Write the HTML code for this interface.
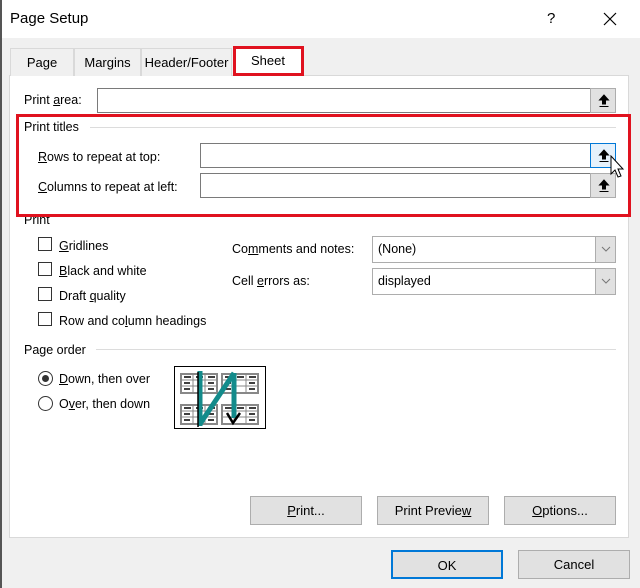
<!DOCTYPE html>
<html><head><style>
*{box-sizing:border-box;margin:0;padding:0}
body{width:640px;height:588px;background:#f0f0f0;font-family:"Liberation Sans",sans-serif;font-size:12.5px;color:#000;position:relative;overflow:hidden}
.a{position:absolute}
.title{left:0;top:0;width:640px;height:38px;background:#fff}
.tab{top:48px;height:28px;border:1px solid #d9d9d9;border-bottom:none;background:#f0f0f0;text-align:center;line-height:28px;font-size:13px}
.panel{left:9px;top:75px;width:620px;height:463px;background:#fff;border:1px solid #d9d9d9}
.inp{background:#fff;border:1px solid #7a7a7a;height:25px}
.ub{width:26px;height:25px;background:#e1e1e1;border:1px solid #adadad}
.ub svg{position:absolute;left:7px;top:5px}
.cb{width:14px;height:14px;border:1px solid #333;background:#fff}
.btn{height:29px;background:#e1e1e1;border:1px solid #adadad;text-align:center;line-height:27px;font-size:13px}
.sel{height:27px;border:1px solid #adadad;background:#fff;padding-left:5px;line-height:25px}
.sel .arr{position:absolute;right:0;top:0;width:20px;height:25px;background:#e1e1e1;border-left:1px solid #adadad}
.line{height:1px;background:#dcdcdc}
u{text-decoration:underline}
</style></head><body>
<div class="a title"></div>
<div class="a" style="left:0;top:0;width:2px;height:588px;background:#555"></div>
<div class="a" style="left:10px;top:10px;font-size:15px">Page Setup</div>
<div class="a" style="left:547px;top:10px;font-size:15px">?</div>
<svg class="a" style="left:603px;top:12px" width="14" height="14"><path d="M1 1L13 13M13 1L1 13" stroke="#000" stroke-width="1.2"/></svg>
<div class="a panel"></div>
<div class="a tab" style="left:10px;width:64px">Page</div>
<div class="a tab" style="left:74px;width:67px">Margins</div>
<div class="a tab" style="left:141px;width:91px">Header/Footer</div>
<div class="a tab" style="left:234px;top:46px;width:68px;height:30px;background:#fff;line-height:30px;border:none">Sheet</div>
<div class="a" style="left:233px;top:46px;width:71px;height:30px;border:3px solid #e0121f"></div>
<div class="a" style="left:24px;top:93px">Print <u>a</u>rea:</div>
<div class="a inp" style="left:97px;top:88px;width:494px"></div>
<div class="a ub" style="left:590px;top:88px"><svg width="12" height="14"><path d="M6 1L1.5 6H4.5V10H7.5V6H10.5Z M1.5 12.5H10.5" fill="#000" stroke="#000" stroke-width="1"/></svg></div>
<div class="a" style="left:24px;top:120px">Print titles</div>
<div class="a line" style="left:90px;top:127px;width:526px"></div>
<div class="a" style="left:38px;top:150px"><u>R</u>ows to repeat at top:</div>
<div class="a inp" style="left:200px;top:143px;width:391px"></div>
<div class="a ub" style="left:590px;top:143px;border-color:#0078d7;background:#e5f1fb"><svg width="12" height="14"><path d="M6 1L1.5 6H4.5V10H7.5V6H10.5Z M1.5 12.5H10.5" fill="#000" stroke="#000" stroke-width="1"/></svg></div>
<div class="a" style="left:38px;top:180px"><u>C</u>olumns to repeat at left:</div>
<div class="a inp" style="left:200px;top:173px;width:391px"></div>
<div class="a ub" style="left:590px;top:173px"><svg width="12" height="14"><path d="M6 1L1.5 6H4.5V10H7.5V6H10.5Z M1.5 12.5H10.5" fill="#000" stroke="#000" stroke-width="1"/></svg></div>
<div class="a" style="left:16px;top:114px;width:615px;height:103px;border:3px solid #e0121f"></div>
<svg class="a" style="left:609px;top:155px" width="20" height="28"><path d="M2 1 L2 19 L6 15 L9 22 L12 21 L9 14 L14 14 Z" fill="#fff" stroke="#000" stroke-width="1"/></svg>
<div class="a" style="left:24px;top:213px;clip-path:inset(4px 0 0 0)">Print</div>
<div class="a cb" style="left:38px;top:237px"></div><div class="a" style="left:59px;top:239px"><u>G</u>ridlines</div>
<div class="a cb" style="left:38px;top:262px"></div><div class="a" style="left:59px;top:264px"><u>B</u>lack and white</div>
<div class="a cb" style="left:38px;top:287px"></div><div class="a" style="left:59px;top:289px">Draft <u>q</u>uality</div>
<div class="a cb" style="left:38px;top:312px"></div><div class="a" style="left:59px;top:314px">Row and co<u>l</u>umn headings</div>
<div class="a" style="left:232px;top:242px">Co<u>m</u>ments and notes:</div>
<div class="a sel" style="left:372px;top:236px;width:244px">(None)<div class="arr"><svg width="20" height="25"><path d="M6 10L10 14L14 10" stroke="#777" fill="none"/></svg></div></div>
<div class="a" style="left:232px;top:274px">Cell <u>e</u>rrors as:</div>
<div class="a sel" style="left:372px;top:268px;width:244px">displayed<div class="arr"><svg width="20" height="25"><path d="M6 10L10 14L14 10" stroke="#777" fill="none"/></svg></div></div>
<div class="a" style="left:24px;top:343px">Page order</div>
<div class="a line" style="left:96px;top:349px;width:520px"></div>
<div class="a" style="left:38px;top:371px;width:15px;height:15px;border:1px solid #333;border-radius:50%;background:#fff"><div style="margin:3px;width:7px;height:7px;border-radius:50%;background:#333"></div></div>
<div class="a" style="left:59px;top:372px"><u>D</u>own, then over</div>
<div class="a" style="left:38px;top:396px;width:15px;height:15px;border:1px solid #333;border-radius:50%;background:#fff"></div>
<div class="a" style="left:59px;top:397px">O<u>v</u>er, then down</div>
<svg class="a" style="left:174px;top:366px" width="92" height="63">
<rect x="0.5" y="0.5" width="91" height="62" fill="#fff" stroke="#000"/>
<g fill="#fff" stroke="#888" stroke-width="2">
<rect x="7" y="8" width="36" height="19"/><rect x="48" y="8" width="36" height="19"/>
<rect x="7" y="39" width="36" height="19"/><rect x="48" y="39" width="36" height="19"/></g>
<g stroke="#888" stroke-width="1"><path d="M7 14H43M7 20H43M48 14H84M48 20H84M7 45H43M7 51H43M48 45H84M48 51H84M19 8V27M31 8V27M60 8V27M72 8V27M19 39V58M31 39V58M60 39V58M72 39V58"/></g>
<g stroke="#000" stroke-width="1.5"><path d="M10 11h7M22 11h7M34 11h7M51 11h7M63 11h7M75 11h7M10 42h7M22 42h7M34 42h7M51 42h7M63 42h7M75 42h7M10 17h6M10 23h6M34 17h6M34 23h6M51 17h6M51 23h6M75 17h6M75 23h6M10 48h6M10 54h6M34 48h6M34 54h6M75 48h6M75 54h6"/></g>
<path d="M26 5 V60 M26 58 L60 7 M60 7 V52" stroke="#138b8b" stroke-width="5" fill="none"/>
<path d="M24 6V61" stroke="#000" stroke-width="1.5"/>
<path d="M53 47 L59 57 L66 47" stroke="#000" stroke-width="2.5" fill="none"/>
</svg>
<div class="a btn" style="left:250px;top:496px;width:112px"><u>P</u>rint...</div>
<div class="a btn" style="left:377px;top:496px;width:112px">Print Previe<u>w</u></div>
<div class="a btn" style="left:504px;top:496px;width:112px"><u>O</u>ptions...</div>
<div class="a btn" style="left:391px;top:550px;width:112px;border:2px solid #0078d7">OK</div>
<div class="a btn" style="left:518px;top:550px;width:112px">Cancel</div>
</body></html>
